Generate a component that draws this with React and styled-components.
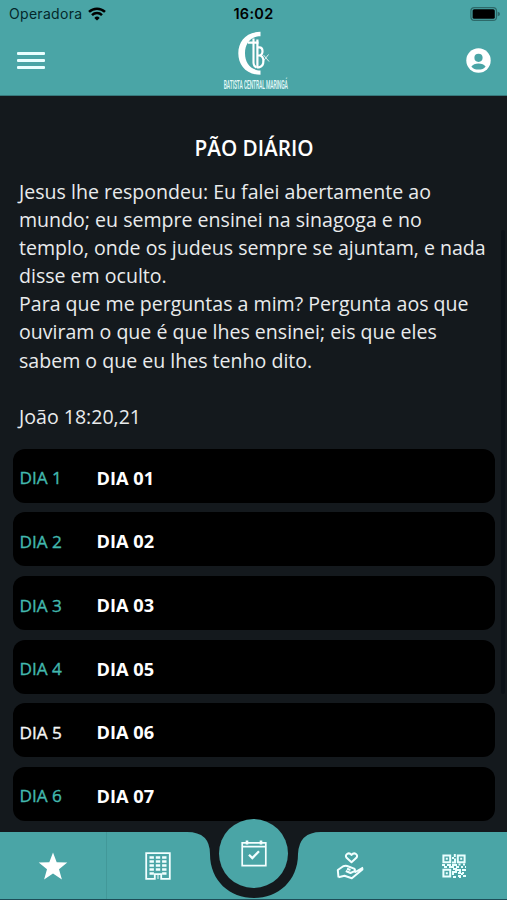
import React from "react";
import styled, { createGlobalStyle, ThemeProvider } from "styled-components";

const theme = {
  colors: {
    primary: "#4aa5a6",
    background: "#14191d",
    card: "#000000",
    accent: "#42b8ae",
    text: "#e9ebec",
  },
};

const GlobalStyle = createGlobalStyle`
  * {
    box-sizing: border-box;
  }

  body {
    margin: 0;
    overflow: hidden;
    background-color: ${(props) => props.theme.colors.background};
    font-family: "Open Sans", "Noto Sans", sans-serif;
  }
`;

const Screen = styled.div`
  display: flex;
  flex-direction: column;
  width: 507px;
  height: 900px;
  overflow: hidden;
  background-color: ${(props) => props.theme.colors.background};
`;

const Header = styled.header`
  flex: none;
  height: 96px;
  background-color: ${(props) => props.theme.colors.primary};
  border-bottom: 1px solid #37797c;
`;

const StatusBar = styled.div`
  display: grid;
  grid-template-columns: 1fr auto 1fr;
  align-items: center;
  height: 27px;
  padding: 0 7px 0 9px;
  font-family: Inter, sans-serif;
  color: #04282a;
`;

const Carrier = styled.div`
  display: flex;
  align-items: center;
  gap: 6px;
  font-size: 14px;
  letter-spacing: 0.3px;
`;

const Clock = styled.div`
  font-size: 14.5px;
  font-weight: 600;
  letter-spacing: 0.3px;
  margin-left: -2px;
  color: #000;
`;

const BatteryIcon = styled.svg`
  justify-self: end;
`;

const NavBar = styled.div`
  display: grid;
  grid-template-columns: 1fr auto 1fr;
  height: 68px;
  padding: 0 16px 0 17px;
`;

const MenuButton = styled.div`
  display: flex;
  flex-direction: column;
  gap: 4px;
  width: 28px;
  padding-top: 25px;
`;

const MenuLine = styled.span`
  height: 3px;
  border-radius: 1px;
  background-color: #e9ffff;
`;

const Brand = styled.svg`
  margin: 2px 0 0 3px;
`;

const ProfileIcon = styled.svg`
  justify-self: end;
  margin-top: 21px;
`;

const Content = styled.main`
  position: relative;
  flex: 1;
  min-height: 0;
  overflow: hidden;
  padding: 0 12px 0 13px;
`;

const ScrollThumb = styled.div`
  position: absolute;
  top: 134px;
  right: 2px;
  width: 4px;
  height: 464px;
  border-radius: 2px;
  background-color: #0d1218;
`;

const Title = styled.h1`
  margin: 37px 0 0;
  font-size: 20.7px;
  font-weight: 600;
  line-height: 30px;
  text-align: center;
  color: #fff;
`;

const Verse = styled.p`
  margin: 15px 0 18px;
  padding-left: 6px;
  font-size: 19.57px;
  line-height: 28.1px;
  white-space: pre;
  color: ${(props) => props.theme.colors.text};
`;

const DayList = styled.div`
  display: flex;
  flex-direction: column;
  gap: 9.6px;
`;

const DayRow = styled.div`
  display: flex;
  align-items: center;
  flex: none;
  height: 54px;
  padding: 4px 6.5px 0;
  border-radius: 12px;
  background-color: ${(props) => props.theme.colors.card};
`;

const DayLabel = styled.span`
  width: 77px;
  font-size: 17.2px;
  font-weight: 500;
  -webkit-text-stroke: 0.35px currentColor;
  color: ${(props) => (props.$read ? "#f4f5f5" : props.theme.colors.accent)};
`;

const DayName = styled.span`
  font-size: 18.2px;
  font-weight: 700;
  color: #fff;
`;

const TabBar = styled.nav`
  position: relative;
  flex: none;
  height: 68px;
`;

const TabShape = styled.svg`
  position: absolute;
  inset: 0;
`;

const Tabs = styled.div`
  position: relative;
  display: grid;
  grid-template-columns: 106px 103px 89px 103px 106px;
  justify-items: center;
  align-items: center;
  height: 68px;
`;

const CenterTab = styled.div`
  display: flex;
  align-items: center;
  justify-content: center;
  width: 69px;
  height: 69px;
  margin-top: -25px;
  border-radius: 50%;
  background-color: ${(props) => props.theme.colors.primary};
`;

const days = [
  { label: "DIA 1", name: "DIA 01" },
  { label: "DIA 2", name: "DIA 02" },
  { label: "DIA 3", name: "DIA 03" },
  { label: "DIA 4", name: "DIA 05" },
  { label: "DIA 5", name: "DIA 06", read: true },
  { label: "DIA 6", name: "DIA 07" },
];

const verse = `Jesus lhe respondeu: Eu falei abertamente ao
mundo; eu sempre ensinei na sinagoga e no
templo, onde os judeus sempre se ajuntam, e nada
disse em oculto.
Para que me perguntas a mim? Pergunta aos que
ouviram o que é que lhes ensinei; eis que eles
sabem o que eu lhes tenho dito.

João 18:20,21`;

const Wifi = () => (
  <svg width="18" height="14" viewBox="0 0 18 14" fill="none" stroke="#000">
    <path d="M1 4.9a11.6 11.6 0 0 1 16 0" strokeWidth="2.5" />
    <path d="M4 8.1a7.2 7.2 0 0 1 10 0" strokeWidth="2.5" />
    <path d="M9 13.6 6.3 10.9a3.9 3.9 0 0 1 5.4 0Z" fill="#000" stroke="none" />
  </svg>
);

const Battery = () => (
  <BatteryIcon width="30" height="14" viewBox="0 0 30 14">
    <rect x="0.9" y="0.6" width="25.6" height="12.8" rx="3.5" fill="none" stroke="#2d6969" strokeWidth="1.2" />
    <rect x="2.6" y="2.2" width="22.2" height="9.6" rx="1.6" />
    <path d="M27.7 4.7q2.3.6 2.3 2.3t-2.3 2.3Z" fill="#2d6969" />
  </BatteryIcon>
);

const Logo = () => (
  <Brand width="66" height="64" viewBox="0 0 66 64" fill="none" stroke="#fff">
    <path
      d="M37.5 2.8C23 2.8 15.3 12.5 15.3 24.3S23 45.8 37.5 45.8V41.4C27.5 41.4 22 34 22 24.3S27.5 7.2 37.5 7.2Z"
      fill="#fff"
      stroke="none"
    />
    <path d="M25 13.6h10.5M30.5 9.5V34q.3 3.5 3 4.5" strokeWidth="2.1" />
    <path d="M34.4 10.5V39M34 18.3h2.3q3.2 0 3.2 4t-3.2 4.2H34M36 26.5q4.4 0 4.4 5.6T36 38.3h-2" strokeWidth="2.2" />
    <path d="m40.5 26 5.5 6.5M45.5 25.5 40 32.5" strokeWidth="0.8" />
    <text
      x="2"
      y="60.5"
      fill="#e6fafa"
      stroke="none"
      fontFamily="Roboto, sans-serif"
      fontSize="12.5"
      fontWeight="500"
      textLength="160"
      lengthAdjust="spacing"
      transform="scale(0.4 1)"
    >
      BATISTA CENTRAL MARINGÁ
    </text>
  </Brand>
);

const Profile = () => (
  <ProfileIcon width="25" height="25" viewBox="0 0 25 25" fill="#4aa5a6">
    <circle cx="12.5" cy="12.5" r="12.2" fill="#fff" />
    <circle cx="12.5" cy="9.8" r="4.1" />
    <path d="M5.4 18.4q2.2-2.9 7.1-2.9t7.1 2.9q-2.4 3.2-7.1 3.2t-7.1-3.2Z" />
  </ProfileIcon>
);

const Star = () => (
  <svg width="30" height="29" viewBox="0 0 30 29" fill="#fff">
    <path d="m15 .5 3.7 9.7 10.6.4-8.3 6.6 2.9 10.3-8.9-6-8.9 6L9 17.2.7 10.6l10.6-.4Z" />
  </svg>
);

const Building = () => (
  <svg width="26" height="28" viewBox="0 0 26 28" fill="none" stroke="#f2ffff">
    <path d="M1.2 1.2h23.6v25.6h-8.6v-4.6h-6.4v4.6H1.2Z" strokeWidth="1.8" />
    <path d="M13 23v4" strokeWidth="1" />
    <path
      d="M4.5 5.5h4.4m1.9 0h4.4m1.9 0h4.4M4.5 9.5h4.4m1.9 0h4.4m1.9 0h4.4M4.5 13.5h4.4m1.9 0h4.4m1.9 0h4.4M4.5 17.5h4.4m1.9 0h4.4m1.9 0h4.4M4.5 21.5h4.4m8.2 0h4.4"
      strokeWidth="2.3"
    />
  </svg>
);

const Calendar = () => (
  <svg width="26" height="27" viewBox="0 0 26 27" fill="none" stroke="#f4ffff">
    <path d="M1.2 2.8h23.6v22.8H1.2ZM1 6.6h24" strokeWidth="1.7" />
    <path d="M6 .5v4M20 .5v4" strokeWidth="2.6" />
    <path d="m8 14.8 3.3 3.3 6.7-6.8" strokeWidth="2.3" />
  </svg>
);

const Donate = () => (
  <svg width="28" height="28" viewBox="0 0 28 28" fill="none" stroke="#f2ffff" strokeWidth="2" strokeLinejoin="round">
    <path d="M15.5 10.3 10.6 5.8C8.2 3 12.6-.7 15.5 3c2.9-3.7 7.3 0 4.9 2.8Z" />
    <path d="M2.5 25.3 1.8 18l5.4-3.8q3-.8 5.3.3l5.6 2.1q1.8 1.4 0 2.8L14.5 21l-4.7-2" />
    <path d="M11 16.8 14.5 18M18.5 20.5l8.6-4.8M27 17 15.8 26.3 8.5 23.8l-6 1.5" />
  </svg>
);

const QrCode = () => (
  <svg width="24" height="24" viewBox="0 0 24 24" fill="none" stroke="#eaffff" strokeWidth="2">
    <path d="M1.4 1.4h6.8v6.8H1.4ZM15.8 1.4h6.8v6.8h-6.8ZM1.4 15.8h6.8v6.8H1.4Z" />
    <path d="M3.8 4.8h2M18.2 4.8h2M3.8 19.2h2" />
    <path d="M12.8 0v3M10 4h2M13 4.5v4h-3M0 11h3m2 0h4m1 0h5m1.5-.5h2m2.5 0h2M2 13h3m2 0h5m2 0h3m2 0h2m2 0h1M11 15h3v3h-3v3M14 16h4v3h-2M11 23h3m2-1h2v2m1-4h2m-1-4h4m-3 6h3m-4-3h2" />
  </svg>
);

const App = () => {
  return (
    <ThemeProvider theme={theme}>
      <GlobalStyle />
      <Screen>
        <Header>
          <StatusBar>
            <Carrier>
              Operadora
              <Wifi />
            </Carrier>
            <Clock>16:02</Clock>
            <Battery />
          </StatusBar>
          <NavBar>
            <MenuButton>
              <MenuLine />
              <MenuLine />
              <MenuLine />
            </MenuButton>
            <Logo />
            <Profile />
          </NavBar>
        </Header>
        <Content>
          <Title>PÃO DIÁRIO</Title>
          <Verse>{verse}</Verse>
          <DayList>
            {days.map((day) => (
              <DayRow key={day.label}>
                <DayLabel $read={day.read}>{day.label}</DayLabel>
                <DayName>{day.name}</DayName>
              </DayRow>
            ))}
          </DayList>
          <ScrollThumb />
        </Content>
        <TabBar>
          <TabShape width="507" height="68" viewBox="0 0 507 68">
            <path
              d="M0 0H187Q210 0 210 22C210 49 230 66 254 66S298 49 298 22Q299 0 321 0H507V67H0Z"
              fill="#4aa5a6"
            />
            <path d="M0 67.5H507" stroke="#1d4d57" />
            <path d="M106.5 0V67" stroke="#429899" />
          </TabShape>
          <Tabs>
            <Star />
            <Building />
            <CenterTab>
              <Calendar />
            </CenterTab>
            <Donate />
            <QrCode />
          </Tabs>
        </TabBar>
      </Screen>
    </ThemeProvider>
  );
};

export default App;
